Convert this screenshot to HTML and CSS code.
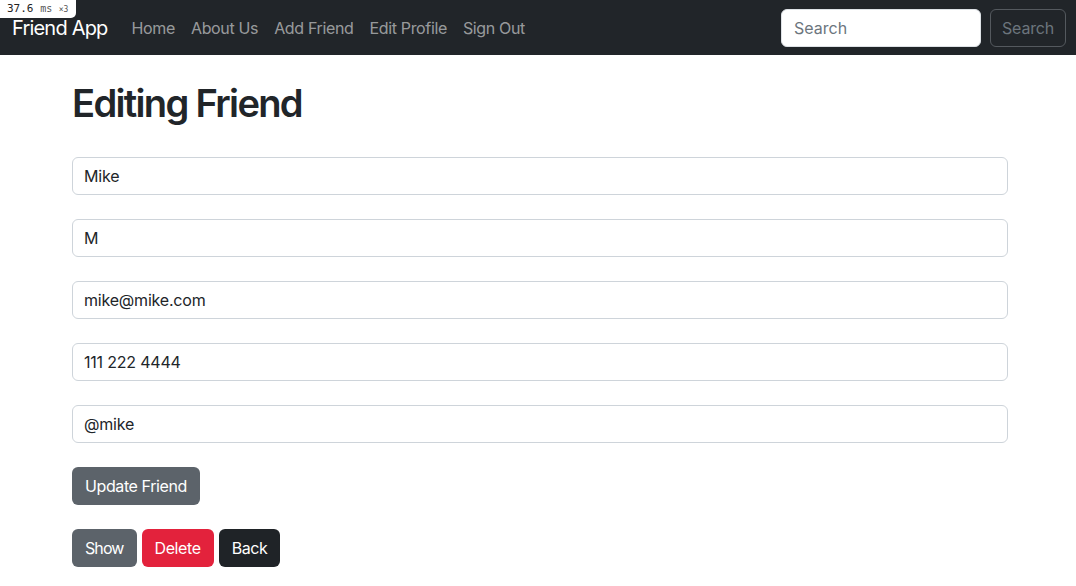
FILE: index.html
```html
<!DOCTYPE html>
<html>
<head>
<meta charset="utf-8">
<link rel="stylesheet" href="styles.css">
</head>
<body>
<div class="timer"><span class="num">37.6</span> <span class="unit">ms</span> <span class="mult">×3</span></div>
<nav class="navbar">
  <a class="brand" href="#">Friend App</a>
  <ul class="nav">
    <li><a href="#">Home</a></li>
    <li><a href="#">About Us</a></li>
    <li><a href="#">Add Friend</a></li>
    <li><a href="#">Edit Profile</a></li>
    <li><a href="#">Sign Out</a></li>
  </ul>
  <form class="search">
    <input class="search-input" type="text" placeholder="Search">
    <button class="search-btn" type="button">Search</button>
  </form>
</nav>
<main class="container">
  <h1 class="title">Editing Friend</h1>
  <form class="friend-form">
    <input class="field" type="text" value="Mike">
    <input class="field" type="text" value="M">
    <input class="field" type="text" value="mike@mike.com">
    <input class="field" type="text" value="111 222 4444">
    <input class="field" type="text" value="@mike">
    <div><button class="btn btn-secondary" type="button">Update Friend</button></div>
  </form>
  <div class="actions">
    <a class="btn btn-secondary btn-show" href="#">Show</a>
    <a class="btn btn-danger" href="#">Delete</a>
    <a class="btn btn-dark" href="#">Back</a>
  </div>
</main>
</body>
</html>
```
FILE: styles.css
```css
* { box-sizing: border-box; }
html, body { margin: 0; padding: 0; }
body {
  font-family: Inter, "Noto Sans", "Liberation Sans", sans-serif;
  font-size: 16px;
  line-height: 1.5;
  color: #212529;
  background: #fff;
}
a { text-decoration: none; }

.timer {
  position: absolute;
  top: 0; left: 0;
  background: #fff;
  border-bottom-right-radius: 5px;
  padding: 0 8px 0 7px;
  height: 18px;
  line-height: 18px;
  font-family: "DejaVu Sans Mono", "Liberation Mono", monospace;
  font-size: 11px;
  color: #222;
  z-index: 10;
}
.timer .unit { font-size: 10px; color: #555; }
.timer .mult { font-size: 8px; color: #555; }

.navbar {
  background: #212529;
  height: 55px;
  display: flex;
  align-items: center;
  padding: 0 10px 0 12px;
}
.brand {
  color: #fff;
  font-size: 20px;
  line-height: 30px;
  margin-right: 16px;
  letter-spacing: -0.8px;
}
.nav {
  list-style: none;
  margin: 0;
  padding: 0;
  display: flex;
  flex: 1;
}
.nav a {
  display: block;
  padding: 8px;
  color: rgba(255,255,255,0.55);
  font-size: 16px;
  letter-spacing: -0.35px;
}
.search { display: flex; align-items: center; gap: 9px; margin-top: 1px; }
.search-input {
  width: 200px;
  height: 38px;
  border: 1px solid #dee2e6;
  border-radius: 6px;
  padding: 6px 12px;
  font: inherit;
  font-size: 16px;
  color: #212529;
}
.search-input::placeholder { color: #6c757d; opacity: 1; }
.search-btn {
  height: 38px;
  width: 76px;
  background: transparent;
  border: 1px solid #54595e;
  border-radius: 6px;
  color: #6c757d;
  font: inherit;
  font-size: 16px;
  padding: 6px 8px;
  letter-spacing: -0.2px;
}

.container {
  width: 936px;
  margin-left: 72px;
}
.title {
  font-size: 38.14px;
  font-weight: 600;
  line-height: 46px;
  margin: 25px 0 31px;
  letter-spacing: -1.7px;
}
.friend-form { display: flex; flex-direction: column; gap: 24px; }
.field {
  display: block;
  width: 100%;
  height: 38px;
  padding: 6px 12px 6px 11px;
  border: 1px solid #ced4da;
  border-radius: 6px;
  font: inherit;
  font-size: 16px;
  color: #212529;
  letter-spacing: -0.2px;
}
.btn {
  display: inline-block;
  height: 38px;
  padding: 6px 12px;
  border: 1px solid transparent;
  border-radius: 6px;
  font: inherit;
  font-size: 16px;
  line-height: 24px;
  color: #fff;
  letter-spacing: -0.4px;
}
.btn-show { letter-spacing: -0.9px; }
.btn-secondary { background: #5c636a; }
.btn-danger { background: #e3223c; }
.btn-dark { background: #1f2327; }
.actions { margin-top: 24px; display: flex; gap: 5px; }
```
